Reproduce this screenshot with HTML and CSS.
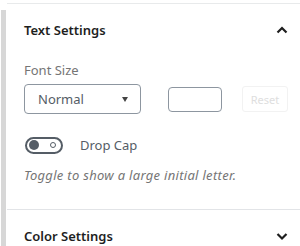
FILE: index.html
```html
<!DOCTYPE html>
<html lang="en">
<head>
    <meta charset="UTF-8">
    <meta name="viewport" content="width=device-width, initial-scale=1.0">
    <title>Block Settings</title>
    <link rel="stylesheet" href="styles.css">
</head>
<body>
    <div class="rail"></div>

    <div class="sidebar">
        <div class="panel open">
            <button class="panel-title">
                <span>Text Settings</span>
                <svg class="chevron" width="14" height="14" viewBox="0 0 14 14">
                    <path d="M2.5 9.5 L7 5 L11.5 9.5" fill="none" stroke="#1e1e1e" stroke-width="2.2"/>
                </svg>
            </button>

            <div class="panel-body">
                <label class="field-label">Font Size</label>
                <div class="font-size-row">
                    <div class="select">
                        <span>Normal</span>
                        <span class="select-arrow"></span>
                    </div>
                    <input class="number-input" type="number">
                    <button class="reset-btn" disabled>Reset</button>
                </div>

                <div class="toggle-row">
                    <span class="toggle">
                        <span class="toggle-thumb"></span>
                        <span class="toggle-ring"></span>
                    </span>
                    <span class="toggle-label">Drop Cap</span>
                </div>
                <p class="help">Toggle to show a large initial letter.</p>
            </div>
        </div>

        <div class="panel">
            <button class="panel-title">
                <span>Color Settings</span>
                <svg class="chevron" width="14" height="14" viewBox="0 0 14 14">
                    <path d="M2.5 5 L7 9.5 L11.5 5" fill="none" stroke="#1e1e1e" stroke-width="2.2"/>
                </svg>
            </button>
        </div>
    </div>
</body>
</html>
```

FILE: styles.css
```css
html {
    overflow: hidden;
}

body {
    font-family: "Noto Sans", "Open Sans", sans-serif;
    margin: 0;
    background-color: #fff;
    display: flex;
    height: 246px;
    overflow: hidden;
}

.rail {
    width: 5px;
    margin: 10px 0 0 1px;
    background-color: #d7d7d7;
    flex-shrink: 0;
}

.sidebar {
    flex: 1;
    margin-left: 1px;
    margin-top: 3px;
    border-top: 1px solid #e8eaeb;
}

.panel {
    border-bottom: 1px solid #e2e4e7;
}

.panel-title {
    display: flex;
    align-items: center;
    justify-content: space-between;
    width: 100%;
    height: 52px;
    padding: 0 11px 0 17px;
    border: none;
    background: none;
    font-family: inherit;
    font-size: 13px;
    font-weight: 600;
    color: #1e1e1e;
    text-align: left;
}

.panel-body {
    padding: 5px 12px 0 17px;
    height: 148px;
}

.field-label {
    display: block;
    font-size: 13px;
    line-height: 18px;
    color: #757575;
    margin-bottom: 5px;
}

.font-size-row {
    display: flex;
    align-items: center;
}

.select {
    box-sizing: border-box;
    width: 117px;
    height: 30px;
    border: 1px solid #8d96a0;
    border-radius: 4px;
    padding: 0 12px 0 13px;
    display: flex;
    align-items: center;
    justify-content: space-between;
    font-size: 13px;
    color: #555d66;
}

.select-arrow {
    width: 0;
    height: 0;
    border-left: 3px solid transparent;
    border-right: 3px solid transparent;
    border-top: 5px solid #444;
}

.number-input {
    box-sizing: border-box;
    width: 54px;
    height: 25px;
    margin-left: 27px;
    border: 1.5px solid #8d96a0;
    border-radius: 4px;
    background: #fff;
    padding: 0;
}

.reset-btn {
    box-sizing: border-box;
    width: 46px;
    height: 26px;
    margin-left: 20px;
    border: 1px solid #f2f2f2;
    border-radius: 3px;
    background: #fff;
    font-family: inherit;
    font-size: 11px;
    color: #dedede;
    padding: 0;
}

.toggle-row {
    display: flex;
    align-items: center;
    margin-top: 22px;
}

.toggle {
    box-sizing: border-box;
    position: relative;
    width: 38px;
    height: 17px;
    margin-left: 1px;
    border: 2px solid #555d66;
    border-radius: 9px;
}

.toggle-thumb {
    position: absolute;
    left: 2px;
    top: 1.5px;
    width: 10px;
    height: 10px;
    border-radius: 50%;
    background: #555d66;
}

.toggle-ring {
    position: absolute;
    right: 5px;
    top: 3.5px;
    width: 6px;
    height: 6px;
    box-sizing: border-box;
    border: 1.5px solid #555d66;
    border-radius: 50%;
}

.toggle-label {
    margin-left: 17px;
    font-size: 13px;
    color: #555d66;
}

.help {
    margin: 12px 0 0;
    font-size: 13px;
    font-style: italic;
    letter-spacing: 0.3px;
    color: #757575;
}
```
